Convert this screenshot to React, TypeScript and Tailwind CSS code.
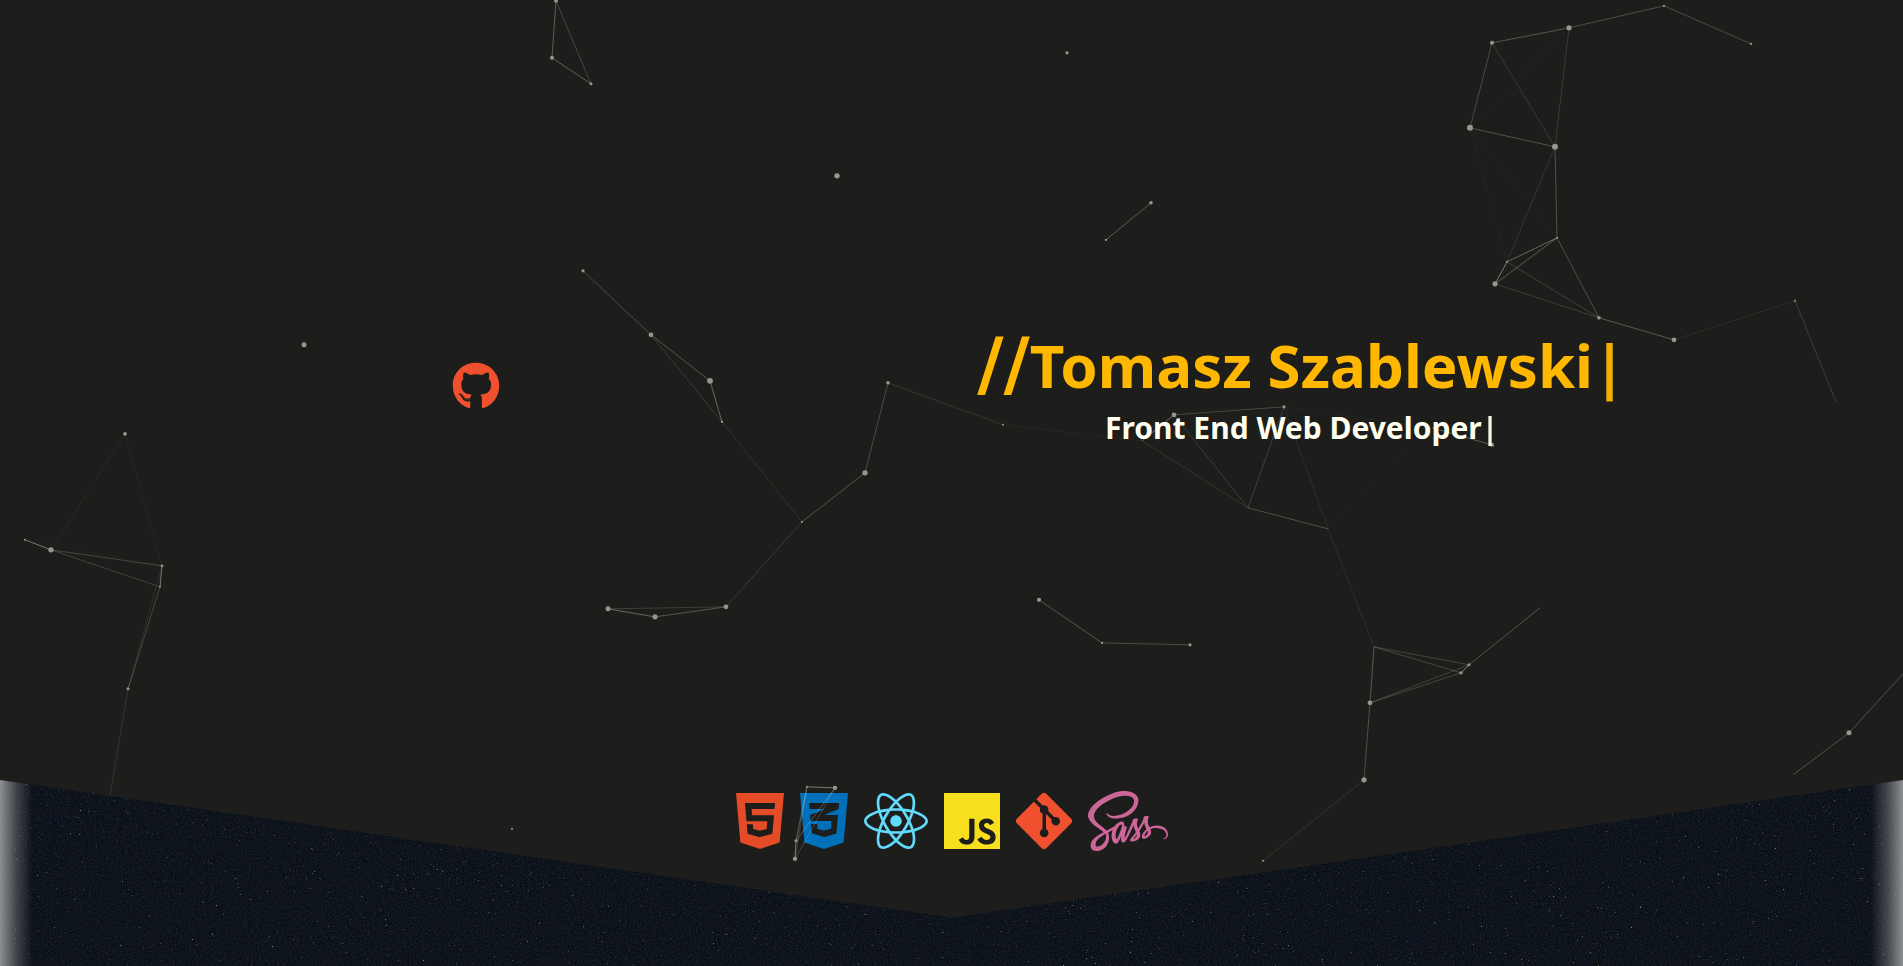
import { FaCss3Alt, FaGitAlt, FaGithub, FaHtml5, FaJs, FaReact, FaSass } from "react-icons/fa";

type Point = [x: number, y: number, radius: number];
type Line = [x1: number, y1: number, x2: number, y2: number, opacity: number];

const POINTS: Point[] = [
  [556, 1, 2], [552, 58, 2], [591, 84, 1.5], [1067, 53, 1.6], [837, 176, 2.7], [304, 345, 2.5],
  [1151, 203, 1.8], [1106, 240, 1.2], [583, 271, 1.6], [651, 335, 2.4], [710, 381, 2.9], [722, 422, 1.2],
  [888, 383, 1.8], [1003, 425, 1], [865, 473, 2.7], [802, 522, 1.1], [726, 607, 2.4], [608, 609, 2.5],
  [655, 617, 2.6], [125, 434, 1.9], [25, 540, 1], [51, 550, 2.7], [162, 566, 1.4], [160, 587, 1],
  [128, 689, 1.5], [512, 829, 1], [1492, 43, 2], [1569, 28, 2.6], [1664, 6, 1.2], [1751, 44, 1.2],
  [1470, 128, 3], [1555, 147, 3], [1557, 238, 1], [1507, 262, 1], [1495, 284, 2.6], [1599, 318, 1.8],
  [1674, 340, 2.4], [1795, 301, 1], [1174, 415, 2.4], [1284, 407, 1.6], [1492, 445, 2], [1039, 600, 2.1],
  [1102, 643, 1.2], [1190, 645, 1.6], [1469, 665, 1.5], [1461, 673, 1.7], [1370, 703, 2.4],
  [1364, 780, 2.6], [1263, 861, 1.1], [1849, 733, 2.5], [807, 787, 1], [835, 788, 2.2], [796, 841, 1.6],
  [795, 859, 2.2],
];

const LINES: Line[] = [
  [556, 1, 552, 58, 0.28], [552, 58, 591, 84, 0.3], [556, 1, 591, 84, 0.18],
  [1151, 203, 1106, 240, 0.28],
  [583, 271, 651, 335, 0.2], [651, 335, 710, 381, 0.24], [710, 381, 722, 422, 0.33], [651, 335, 722, 422, 0.13],
  [722, 422, 802, 522, 0.09], [888, 383, 865, 473, 0.2], [888, 383, 1003, 425, 0.1], [1003, 425, 1142, 441, 0.04],
  [865, 473, 802, 522, 0.24], [802, 522, 726, 607, 0.13],
  [726, 607, 608, 609, 0.14], [608, 609, 655, 617, 0.33], [655, 617, 726, 607, 0.25],
  [125, 434, 51, 550, 0.05], [125, 434, 162, 566, 0.04], [25, 540, 51, 550, 0.4], [25, 540, 162, 566, 0.02],
  [51, 550, 162, 566, 0.18], [51, 550, 160, 587, 0.16], [162, 566, 160, 587, 0.4], [160, 587, 128, 689, 0.18],
  [162, 566, 128, 689, 0.08], [128, 689, 110, 796, 0.11],
  [1492, 43, 1569, 28, 0.25], [1569, 28, 1664, 6, 0.2], [1664, 6, 1751, 44, 0.2], [1492, 43, 1470, 128, 0.2],
  [1492, 43, 1555, 147, 0.12], [1569, 28, 1555, 147, 0.12], [1569, 28, 1470, 128, 0.03], [1470, 128, 1555, 147, 0.23],
  [1470, 128, 1557, 238, 0.03], [1470, 128, 1507, 262, 0.03], [1555, 147, 1557, 238, 0.23], [1555, 147, 1507, 262, 0.1],
  [1557, 238, 1507, 262, 0.33], [1557, 238, 1495, 284, 0.27], [1507, 262, 1495, 284, 0.42],
  [1557, 238, 1599, 318, 0.22], [1507, 262, 1599, 318, 0.15], [1495, 284, 1599, 318, 0.14],
  [1599, 318, 1674, 340, 0.26], [1674, 340, 1795, 301, 0.08], [1795, 301, 1836, 402, 0.14],
  [1174, 415, 1284, 407, 0.18], [1174, 415, 1142, 441, 0.35], [1174, 415, 1248, 508, 0.13],
  [1142, 441, 1248, 508, 0.1], [1284, 407, 1248, 508, 0.16], [1248, 508, 1328, 529, 0.22],
  [1284, 407, 1328, 529, 0.08], [1284, 407, 1432, 428, 0.03], [1432, 428, 1328, 529, 0.02],
  [1432, 428, 1492, 445, 0.28], [1328, 529, 1374, 647, 0.08],
  [1039, 600, 1102, 643, 0.24], [1102, 643, 1190, 645, 0.2],
  [1374, 647, 1469, 665, 0.17], [1374, 647, 1461, 673, 0.18], [1374, 647, 1370, 703, 0.27],
  [1370, 703, 1461, 673, 0.18], [1370, 703, 1469, 665, 0.15], [1469, 665, 1461, 673, 0.45],
  [1469, 665, 1540, 608, 0.24], [1370, 703, 1364, 780, 0.22], [1461, 673, 1364, 780, 0.01],
  [1364, 780, 1263, 861, 0.1],
  [1849, 733, 1903, 674, 0.22], [1849, 733, 1793, 775, 0.24],
  [807, 787, 835, 788, 0.4], [807, 787, 796, 841, 0.3], [835, 788, 796, 841, 0.25],
  [835, 788, 795, 859, 0.18], [796, 841, 795, 859, 0.4], [807, 787, 795, 859, 0.15],
];

const STAR_COLORS = ["#7d8599", "#5a6176", "#3c4459", "#8d92a2", "#343b55", "#635a3f"];

function makeStars(count: number) {
  let seed = 20;
  const random = () => {
    seed = (seed * 16807) % 2147483647;
    return seed / 2147483647;
  };
  return Array.from({ length: count }, () => ({
    x: Math.floor(random() * 1920),
    y: Math.floor(random() * 200),
    color: STAR_COLORS[Math.floor(random() * STAR_COLORS.length)],
    opacity: 0.15 + Math.pow(random(), 4) * 0.85,
  }));
}

const STARS = makeStars(5000);

const SKILLS = [
  { name: "HTML5", Icon: FaHtml5, look: "w-12 text-[#e34c26]" },
  { name: "CSS3", Icon: FaCss3Alt, look: "w-12 text-[#0070ba]" },
  { name: "React", Icon: FaReact, look: "w-16 text-[#61dafb]" },
  { name: "JavaScript", Icon: FaJs, look: "w-14 text-[#f7df1e]" },
  { name: "Git", Icon: FaGitAlt, look: "w-14 text-[#f1502f]" },
  { name: "Sass", Icon: FaSass, look: "w-20 text-[#cc6699]" },
];

function Particles() {
  return (
    <svg
      className="pointer-events-none absolute inset-0 h-full w-full"
      viewBox="0 0 1903 918"
      preserveAspectRatio="xMidYMid slice"
      aria-hidden="true"
    >
      <g stroke="#fffff0" strokeWidth="1">
        {LINES.map(([x1, y1, x2, y2, opacity], i) => (
          <line key={i} x1={x1} y1={y1} x2={x2} y2={y2} strokeOpacity={opacity} />
        ))}
      </g>
      <g fill="#96968c">
        {POINTS.map(([cx, cy, r], i) => (
          <circle key={i} cx={cx} cy={cy} r={r} />
        ))}
      </g>
    </svg>
  );
}

function StarField() {
  return (
    <svg
      className="absolute inset-x-0 bottom-0 h-[200px] w-full"
      viewBox="0 0 1903 200"
      preserveAspectRatio="xMidYMax slice"
      aria-hidden="true"
    >
      <filter id="grain" x="0" y="0" width="100%" height="100%" colorInterpolationFilters="sRGB">
        <feTurbulence type="fractalNoise" baseFrequency="0.6" numOctaves="2" seed="4" />
        <feColorMatrix values="0 0 0 0 0.14  0 0 0 0 0.17  0 0 0 0 0.22  1.4 0 0 0 -0.55" />
      </filter>
      <rect width="1903" height="200" filter="url(#grain)" />
      {STARS.map((star, i) => (
        <rect key={i} x={star.x} y={star.y} width="1" height="1" fill={star.color} fillOpacity={star.opacity} />
      ))}
    </svg>
  );
}

export default function App() {
  return (
    <div className="relative min-h-screen overflow-hidden bg-[#0a0f17] font-['Noto_Sans','Open_Sans',sans-serif]">
      <StarField />
      <div className="absolute inset-y-0 left-0 w-8 bg-linear-to-r from-[#8d9091] via-[#8d9091]/40 via-50% to-transparent" />
      <div className="absolute inset-y-0 right-0 w-8 bg-linear-to-l from-[#8d9091] via-[#8d9091]/40 via-50% to-transparent" />
      <header className="relative h-[95vh] bg-[#1d1d1b] [clip-path:polygon(0_0,100%_0,100%_85%,50%_100%,0_85%)]">
        <Particles />
        <div className="relative flex h-[80vh] items-center">
          <div className="flex w-1/2 justify-center">
            <a href="https://github.com" aria-label="GitHub" className="text-5xl text-[#f1502f]">
              <FaGithub />
            </a>
          </div>
          <div className="flex w-[36.8%] flex-col items-center font-bold whitespace-nowrap">
            <h1 className="text-[60px] leading-[84px] text-[#ffb700]">
              <span className="font-['DejaVu_Sans',sans-serif] text-7xl leading-none">//</span>
              Tomasz Szablewski<span className="opacity-95">|</span>
            </h1>
            <h2 className="text-3xl leading-[42px] text-[#fffff0]">
              Front End Web Developer<span className="opacity-95">|</span>
            </h2>
          </div>
        </div>
        <ul className="mt-4 flex justify-center gap-4">
          {SKILLS.map(({ name, Icon, look }) => (
            <li key={name}>
              <Icon className={`h-16 ${look}`} title={name} />
            </li>
          ))}
        </ul>
      </header>
    </div>
  );
}
